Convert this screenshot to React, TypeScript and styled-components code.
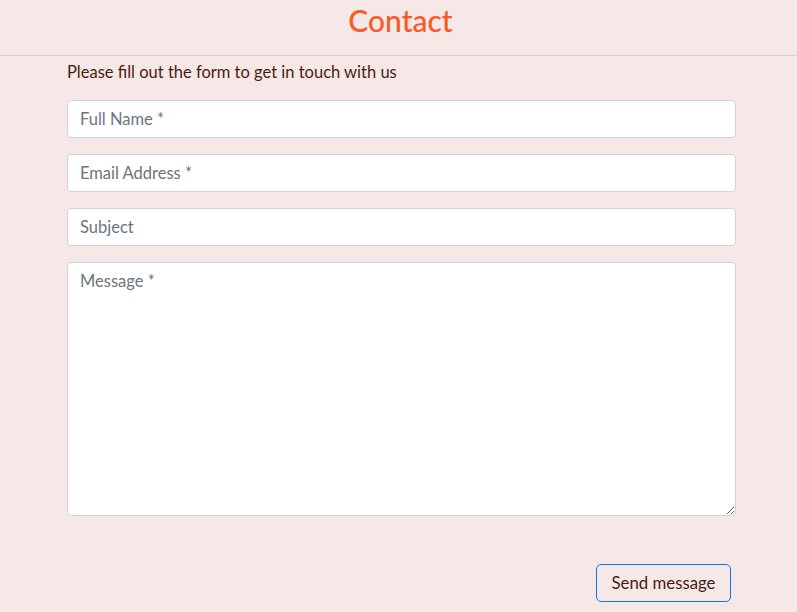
import React from "react";
import styled, { createGlobalStyle } from "styled-components";

const Global = createGlobalStyle`
  html, body { margin: 0; padding: 0; background: #f7e8e8; }
  body { font-family: "Lato", "Noto Sans", sans-serif; }
  * { box-sizing: border-box; }
`;

const Header = styled.header`
  height: 56px;
  border-bottom: 1px solid #dccfcf;
  display: flex;
  justify-content: center;
  align-items: flex-start;
`;

const Title = styled.h1`
  margin: 2px 0 0 4px;
  font-size: 30px;
  font-weight: 500;
  color: #ff5722;
  line-height: 36px;
`;

const Main = styled.main`
  padding: 6px 61px 0 67px;
`;

const Intro = styled.p`
  margin: 0 0 18px 0;
  font-size: 16.5px;
  line-height: 20px;
  color: #4a1c0e;
`;

const Form = styled.form`
  display: flex;
  flex-direction: column;
  gap: 16px;
`;

const Field = styled.input`
  height: 38px;
  width: 100%;
  padding: 5px 12px 6px;
  font-family: inherit;
  font-size: 16.5px;
  color: #495057;
  background: #fff;
  border: 1px solid #ced4da;
  border-radius: 4px;
  &::placeholder { color: #6c757d; opacity: 1; }
`;

const Area = styled.textarea`
  height: 254px;
  width: 100%;
  padding: 6px 12px;
  font-family: inherit;
  font-size: 16.5px;
  line-height: 24px;
  color: #495057;
  background: #fff;
  border: 1px solid #ced4da;
  border-radius: 4px;
  resize: vertical;
  &::placeholder { color: #6c757d; opacity: 1; }
`;

const Actions = styled.div`
  display: flex;
  justify-content: flex-end;
  padding: 32px 5px 0 0;
`;

const Button = styled.button`
  height: 38px;
  width: 135px;
  padding: 0 0 1px;
  font-family: inherit;
  font-size: 16.8px;
  color: #4a1c0e;
  background: transparent;
  border: 1px solid #1a73e8;
  border-radius: 5px;
  cursor: pointer;
`;

export default function App() {
  return (
    <>
      <Global />
      <Header>
        <Title>Contact</Title>
      </Header>
      <Main>
        <Intro>Please fill out the form to get in touch with us</Intro>
        <Form onSubmit={(e) => e.preventDefault()}>
          <Field placeholder="Full Name *" />
          <Field placeholder="Email Address *" />
          <Field placeholder="Subject" />
          <Area placeholder="Message *" />
          <Actions>
            <Button type="submit">Send message</Button>
          </Actions>
        </Form>
      </Main>
    </>
  );
}
